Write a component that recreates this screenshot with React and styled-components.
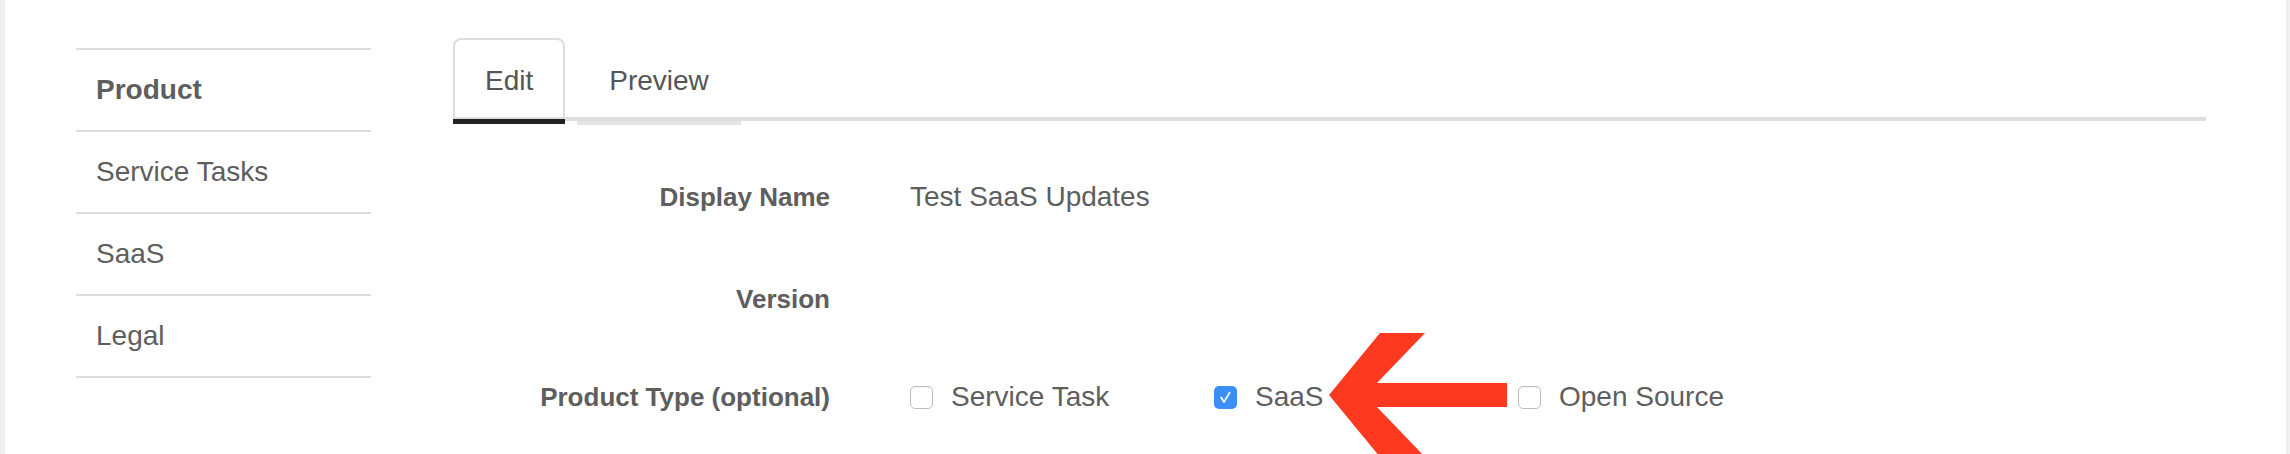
import React from "react";
import styled, { createGlobalStyle } from "styled-components";

const GlobalStyle = createGlobalStyle`
  html, body {
    margin: 0;
    padding: 0;
    overflow: hidden;
    background: #ffffff;
  }
  body {
    font-family: "Liberation Sans", Arial, Helvetica, sans-serif;
    color: #5e5e5e;
  }
`;

const Page = styled.div`
  position: relative;
  display: flex;
  align-items: flex-start;
  height: 454px;
  box-sizing: border-box;
  border-left: 5px solid #f0f0f0;
  border-right: 4px solid #f0f0f0;
  background: #ffffff;
  overflow: hidden;
`;

const Sidebar = styled.ul`
  list-style: none;
  margin: 48px 0 0 71px;
  padding: 0;
  width: 295px;
  flex-shrink: 0;
`;

const SideItem = styled.li`
  border-top: 2px solid #dddddd;
  height: 80px;
  line-height: 80px;
  padding-left: 20px;
  font-size: 28px;
  font-weight: ${(p) => (p.$active ? 700 : 400)};
  color: #5e5e5e;

  &:last-child {
    border-bottom: 2px solid #dddddd;
  }
`;

const Main = styled.div`
  margin: 38px 0 0 82px;
  width: 1753px;
  flex-shrink: 0;
`;

const Tabs = styled.div`
  display: flex;
  align-items: flex-end;
  border-bottom: 4px solid #dddddd;
`;

const Tab = styled.div`
  position: relative;
  box-sizing: border-box;
  height: 79px;
  font-size: 28px;
  line-height: 40px;
  color: #555555;
  background: #ffffff;
  padding: ${(p) => (p.$active ? "21px 30px 16px" : "23px 32px 16px")};
  margin-left: ${(p) => (p.$active ? "0" : "12px")};
  border: ${(p) => (p.$active ? "2px solid #dddddd" : "none")};
  border-bottom: none;
  border-radius: 8px 8px 0 0;

  &::after {
    content: "";
    position: absolute;
    left: ${(p) => (p.$active ? "-2px" : "0")};
    right: ${(p) => (p.$active ? "-2px" : "0")};
    bottom: ${(p) => (p.$active ? "-7px" : "-8px")};
    height: ${(p) => (p.$active ? "5px" : "4px")};
    background: ${(p) => (p.$active ? "#222222" : "#e6e6e6")};
  }
`;

const Form = styled.div`
  padding-top: 26px;
`;

const Row = styled.div`
  display: grid;
  grid-template-columns: 377px 1fr;
  column-gap: 80px;
  align-items: center;
  height: ${(p) => p.$height || 100}px;
`;

const Label = styled.div`
  text-align: right;
  font-size: 26px;
  font-weight: 700;
  color: #5e5e5e;
`;

const Value = styled.div`
  font-size: 28px;
  color: #5e5e5e;
`;

const Options = styled.div`
  display: grid;
  grid-template-columns: repeat(3, 304px);
  align-items: center;
`;

const Option = styled.label`
  display: flex;
  align-items: center;
  gap: 18px;
  font-size: 28px;
  color: #5e5e5e;
`;

const Box = styled.span`
  display: inline-flex;
  align-items: center;
  justify-content: center;
  box-sizing: border-box;
  width: 23px;
  height: 23px;
  border-radius: 5px;
  border: ${(p) => (p.$checked ? "none" : "1.5px solid #bdbdbd")};
  background: ${(p) => (p.$checked ? "#3a8ef6" : "#ffffff")};
  box-shadow: ${(p) => (p.$checked ? "none" : "inset 0 1px 1px rgba(0,0,0,0.05)")};
`;

const Arrow = styled.svg`
  position: absolute;
  left: 1324px;
  top: 332px;
  pointer-events: none;
`;

const Checkbox = ({ checked }) => (
  <Box $checked={checked}>
    {checked && (
      <svg width="23" height="23" viewBox="0 0 23 23">
        <path
          d="M7.2 11.6 L10 16 L15.6 6.6"
          fill="none"
          stroke="#ffffff"
          strokeWidth="1.8"
          strokeLinecap="round"
          strokeLinejoin="round"
        />
      </svg>
    )}
  </Box>
);

const sections = ["Product", "Service Tasks", "SaaS", "Legal"];
const types = [
  { name: "Service Task", checked: false },
  { name: "SaaS", checked: true },
  { name: "Open Source", checked: false },
];

export default function App() {
  return (
    <>
      <GlobalStyle />
      <Page>
        <Sidebar>
          {sections.map((s, i) => (
            <SideItem key={s} $active={i === 0}>
              {s}
            </SideItem>
          ))}
        </Sidebar>

        <Main>
          <Tabs>
            <Tab $active>Edit</Tab>
            <Tab>Preview</Tab>
          </Tabs>

          <Form>
            <Row $height={100}>
              <Label>Display Name</Label>
              <Value>Test SaaS Updates</Value>
            </Row>
            <Row $height={104}>
              <Label>Version</Label>
              <Value />
            </Row>
            <Row $height={92}>
              <Label>Product Type (optional)</Label>
              <Options>
                {types.map((t) => (
                  <Option key={t.name}>
                    <Checkbox checked={t.checked} />
                    {t.name}
                  </Option>
                ))}
              </Options>
            </Row>
          </Form>
        </Main>

        <Arrow width="180" height="127" viewBox="0 0 180 127">
          <polygon
            points="0,63 51,1 96,1 48,51 178,51 178,75 48,75 96,125 51,125"
            fill="#fd3a20"
          />
        </Arrow>
      </Page>
    </>
  );
}
